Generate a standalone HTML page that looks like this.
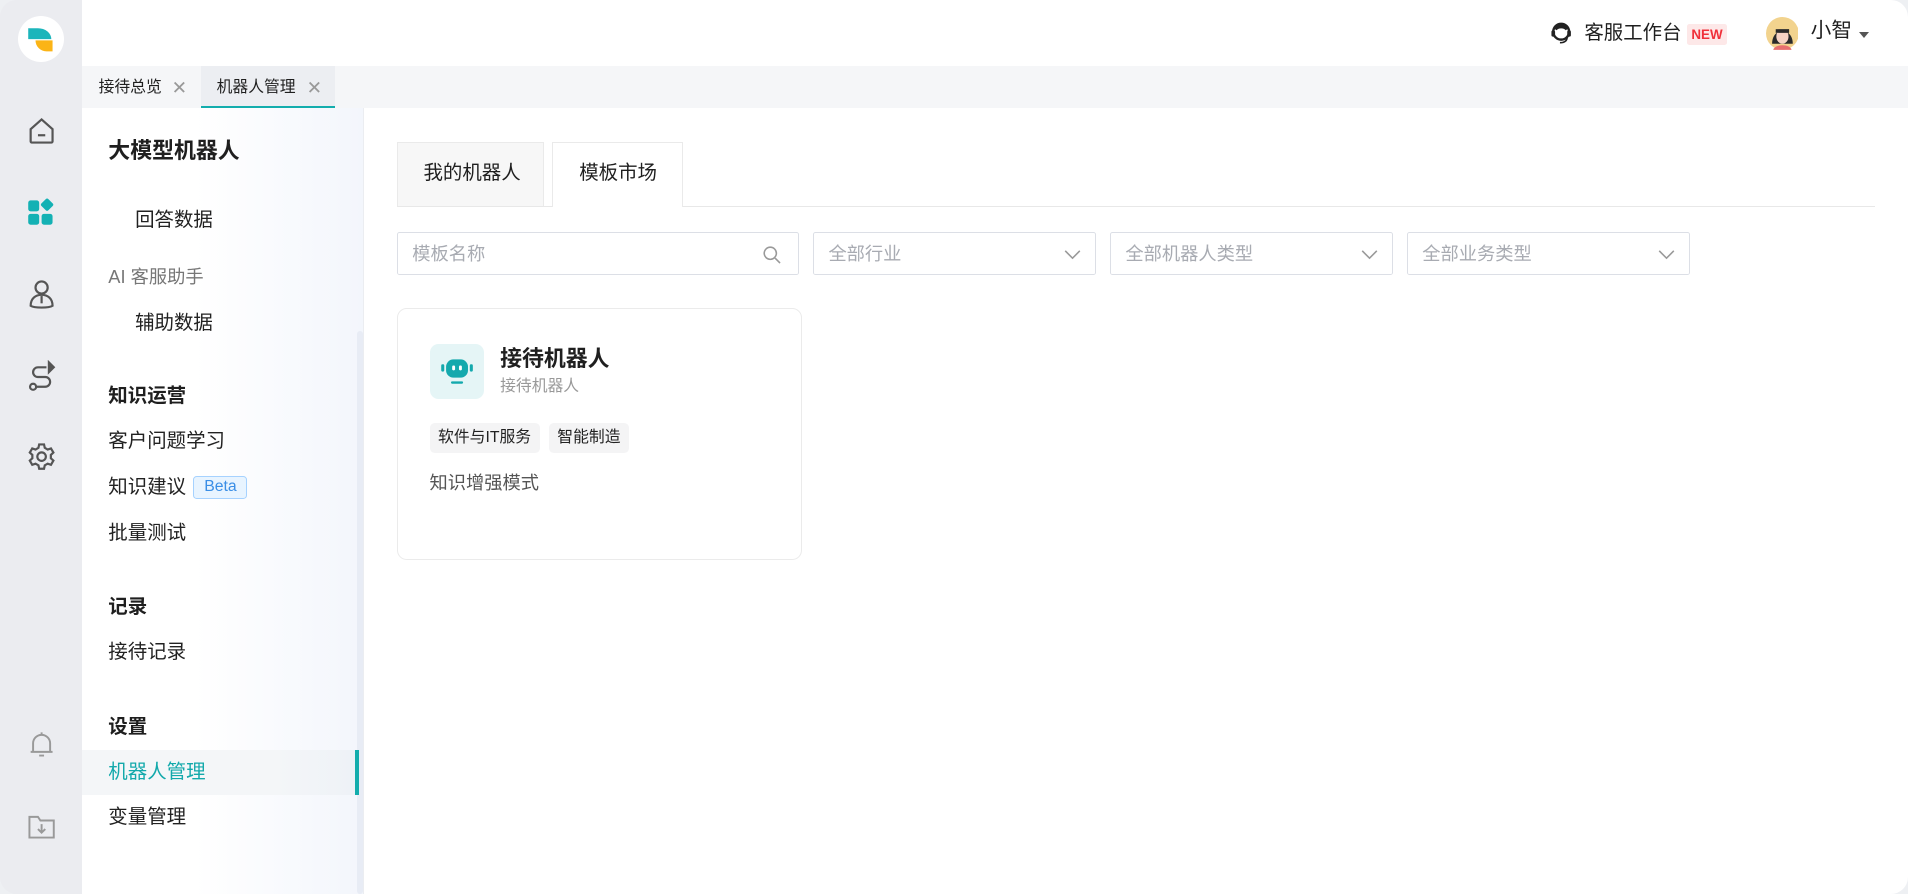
<!DOCTYPE html>
<html><head><meta charset="utf-8"><style>
html,body{margin:0;padding:0;width:1908px;height:894px;overflow:hidden;background:#eef0f3}
#z{zoom:1.21684;width:1568px;height:735px;position:relative;background:#ebedf1;border-radius:14px;overflow:hidden;font-family:"Liberation Sans","Noto Sans CJK SC",sans-serif;color:#1f1f1f}
.a{position:absolute}
.rail{left:0;top:0;width:67px;height:735px;background:#ebecf0}
.hdr{left:67px;top:0;right:0;height:54px;background:#fff}
.tabbar{left:67px;top:54px;right:0;height:35px;background:#f5f6f8}
.side{left:67px;top:89px;width:231px;height:646px;background:linear-gradient(90deg,#fff 40%,#f3f6fc)}
.main{left:299px;top:89px;right:0;height:646px;background:#fff}
.t{position:absolute;white-space:nowrap;line-height:1.2}
.sb{font-weight:bold;font-size:16px}
.si{font-size:16px;color:#222}
.inp{position:absolute;top:191px;height:35px;border:1px solid #dcdfe6;border-radius:2px;background:#fff;font-size:15px;line-height:1.2;color:#a8abb2;box-sizing:border-box;padding:8px 12px}
.chev{position:absolute;right:12px;top:10px}
.tag{position:absolute;top:348px;height:24px;background:#f4f4f5;border-radius:4px;font-size:13px;line-height:24px;padding:0 7px;color:#222}
</style></head><body><div id="z">
<div class="a rail"></div>
<div class="a" style="left:15px;top:13px;width:38px;height:38px;border-radius:50%;background:#fff"></div>
<svg class="a" style="left:22px;top:22px" width="22" height="22" viewBox="0 0 22 22"><path d="M1 1h8a11 9 0 0 1 11 9H1z" fill="#1cb5bb"/><path d="M7 11h14v9H16a9 9 0 0 1-9-9z" fill="#fbb416"/></svg>
<svg class="a" style="left:22px;top:96px" width="24" height="24" viewBox="0 0 24 24" fill="none" stroke="#555" stroke-width="1.8"><path d="M3 10l9-8 9 8v10a1 1 0 0 1-1 1H4a1 1 0 0 1-1-1z"/><path d="M9 15h6"/></svg>
<svg class="a" style="left:22px;top:163px" width="24" height="24" viewBox="0 0 24 24" fill="#14b1b4"><rect x="1" y="2" width="9" height="9" rx="2"/><rect x="1" y="13" width="9" height="9" rx="2"/><rect x="12" y="13" width="9" height="9" rx="2"/><rect x="12.5" y="1.5" width="8" height="8" rx="1.5" transform="rotate(45 16.5 5.5)"/></svg>
<svg class="a" style="left:22px;top:229px" width="24" height="26" viewBox="0 0 24 26" fill="none" stroke="#555" stroke-width="1.8"><circle cx="12" cy="7" r="5"/><path d="M3 22c0-6 4-9 9-9s9 3 9 9c-3 2-15 2-18 0z"/><path d="M12 14v6"/></svg>
<svg class="a" style="left:22px;top:296px" width="24" height="26" viewBox="0 0 24 26" fill="none" stroke="#555" stroke-width="1.8"><path d="M16 6H9a4 4 0 0 0 0 8h6a4 4 0 0 1 0 8H8"/><circle cx="5" cy="22" r="2.5"/><path d="M18 2l4 4-4 4z" fill="#555"/></svg>
<svg class="a" style="left:22px;top:363px" width="24" height="24" viewBox="0 0 24 24" fill="none" stroke="#555" stroke-width="1.8"><circle cx="12" cy="12" r="3.5"/><path d="M10 2h4l.6 2.8 2.4 1.4 2.7-.9 2 3.4-2.1 1.9v2.8l2.1 1.9-2 3.4-2.7-.9-2.4 1.4L14 22h-4l-.6-2.8-2.4-1.4-2.7.9-2-3.4 2.1-1.9v-2.8L2.3 8.7l2-3.4 2.7.9 2.4-1.4z"/></svg>
<svg class="a" style="left:22px;top:600px" width="24" height="24" viewBox="0 0 24 24" fill="none" stroke="#999" stroke-width="1.6"><path d="M5 18V11a7 7 0 0 1 14 0v7zM3 18h18M10 21h4M12 2v2"/></svg>
<svg class="a" style="left:22px;top:667px" width="24" height="24" viewBox="0 0 24 24" fill="none" stroke="#999" stroke-width="1.6"><path d="M2 4h7l2 3h11v14H2z"/><path d="M12 10v7M9 14l3 3 3-3"/></svg>

<div class="a hdr"></div>
<svg class="a" style="left:1273px;top:18px" width="20" height="20" viewBox="0 0 20 20"><circle cx="10" cy="8" r="6.5" fill="none" stroke="#222" stroke-width="2"/><path d="M5 6c2-3 8-3 10 0" stroke="#222" stroke-width="3" fill="none"/><rect x="2" y="7" width="3" height="5" rx="1" fill="#222"/><rect x="15" y="7" width="3" height="5" rx="1" fill="#222"/><path d="M15 12c0 4-3 5-6 5" stroke="#222" stroke-width="1.3" fill="none"/></svg>
<div class="t" style="left:1302px;top:18px;font-size:16px">客服工作台</div>
<div class="t" style="left:1386px;top:20px;background:#fde8e8;color:#f0303a;font-size:11px;font-weight:bold;padding:2px 4px;border-radius:2px">NEW</div>
<svg class="a" style="left:1451px;top:14px" width="27" height="27" viewBox="0 0 27 27"><circle cx="13.5" cy="13.5" r="13.5" fill="#f2d38e"/><path d="M5 22c0-14 17-14 17 0z" fill="#2a2a2a"/><ellipse cx="13.5" cy="16" rx="5" ry="6" fill="#f6d3c4"/><path d="M8 13h11v-3H8z" fill="#2a2a2a"/><path d="M6 27c1-5 14-5 15 0z" fill="#e86f6f"/></svg>
<div class="t" style="left:1488px;top:16px;font-size:17px">小智</div>
<div class="a" style="left:1528px;top:26px;border:4.5px solid transparent;border-top:5px solid #555;border-bottom:0"></div>

<div class="a tabbar"></div>
<div class="t" style="left:81px;top:65px;font-size:13px">接待总览</div>
<div class="t" style="left:141px;top:63px;font-size:15px;color:#999">✕</div>
<div class="a" style="left:165px;top:54px;width:110px;height:33px;background:#eceef2;border-bottom:2px solid #13adad"></div>
<div class="t" style="left:178px;top:65px;font-size:13px">机器人管理</div>
<div class="t" style="left:252px;top:63px;font-size:15px;color:#999">✕</div>

<div class="a side"></div>
<div class="a" style="left:293px;top:272px;width:5px;height:463px;background:#e8ecf5;border-radius:3px"></div>
<div class="t" style="left:89px;top:113px;font-size:18px;font-weight:bold">大模型机器人</div>
<div class="t si" style="left:111px;top:172px">回答数据</div>
<div class="t" style="left:89px;top:219px;font-size:15px;color:#777">AI 客服助手</div>
<div class="t si" style="left:111px;top:256px">辅助数据</div>
<div class="t sb" style="left:89px;top:316px">知识运营</div>
<div class="t si" style="left:89px;top:353px">客户问题学习</div>
<div class="t si" style="left:89px;top:391px">知识建议</div>
<div class="t" style="left:159px;top:391px;font-size:13px;color:#3a8ee6;background:#e8f4ff;border:1px solid #a6d2ff;border-radius:3px;padding:1px 8px">Beta</div>
<div class="t si" style="left:89px;top:429px">批量测试</div>
<div class="t sb" style="left:89px;top:490px">记录</div>
<div class="t si" style="left:89px;top:527px">接待记录</div>
<div class="t sb" style="left:89px;top:588px">设置</div>
<div class="a" style="left:67px;top:616px;width:225px;height:37px;background:linear-gradient(90deg,#f4f6f8 70%,#eef2f7)"></div>
<div class="a" style="left:292px;top:616px;width:3px;height:37px;background:#13adad"></div>
<div class="t si" style="left:89px;top:625px;color:#13a9ab">机器人管理</div>
<div class="t si" style="left:89px;top:662px">变量管理</div>

<div class="a main"></div>
<div class="a" style="left:326px;top:169px;width:1215px;height:1px;background:#e8e8e8"></div>
<div class="a" style="left:326px;top:117px;width:121px;height:52px;background:#f7f7f7;border:1px solid #eaeaea;border-bottom:0;box-sizing:border-box"></div>
<div class="t" style="left:348px;top:133px;font-size:16px">我的机器人</div>
<div class="a" style="left:454px;top:117px;width:107px;height:53px;background:#fff;border:1px solid #eaeaea;border-bottom:0;box-sizing:border-box"></div>
<div class="t" style="left:476px;top:133px;font-size:16px">模板市场</div>

<div class="inp" style="left:326px;width:331px">模板名称<svg style="position:absolute;right:14px;top:10px" width="15" height="15" viewBox="0 0 15 15" fill="none" stroke="#999" stroke-width="1.3"><circle cx="6" cy="6" r="5"/><path d="M10 10l4 4"/></svg></div>
<div class="inp" style="left:668px;width:233px">全部行业<svg class="chev" width="14" height="14" viewBox="0 0 14 14" fill="none" stroke="#999" stroke-width="1.3"><path d="M1 4l6 6 6-6"/></svg></div>
<div class="inp" style="left:912px;width:233px">全部机器人类型<svg class="chev" width="14" height="14" viewBox="0 0 14 14" fill="none" stroke="#999" stroke-width="1.3"><path d="M1 4l6 6 6-6"/></svg></div>
<div class="inp" style="left:1156px;width:233px">全部业务类型<svg class="chev" width="14" height="14" viewBox="0 0 14 14" fill="none" stroke="#999" stroke-width="1.3"><path d="M1 4l6 6 6-6"/></svg></div>

<div class="a" style="left:326px;top:253px;width:333px;height:207px;border:1px solid #ebebeb;border-radius:8px;box-sizing:border-box;background:#fff"></div>
<div class="a" style="left:353px;top:283px;width:45px;height:45px;border-radius:7px;background:#e5f5f6"></div>
<svg class="a" style="left:362px;top:293px" width="28" height="24" viewBox="0 0 28 24"><rect x="5" y="2" width="18" height="15" rx="6" fill="#14a9ad"/><rect x="1" y="6" width="2.5" height="6" rx="1" fill="#14a9ad"/><rect x="24.5" y="6" width="2.5" height="6" rx="1" fill="#14a9ad"/><rect x="10" y="7" width="2.4" height="4" rx="1" fill="#fff"/><rect x="15.6" y="7" width="2.4" height="4" rx="1" fill="#fff"/><rect x="9" y="20" width="10" height="2" rx="1" fill="#14a9ad"/></svg>
<div class="t" style="left:411px;top:284px;font-size:18px;font-weight:bold">接待机器人</div>
<div class="t" style="left:411px;top:311px;font-size:13px;color:#999">接待机器人</div>
<div class="tag" style="left:353px">软件与IT服务</div>
<div class="tag" style="left:451px">智能制造</div>
<div class="t" style="left:353px;top:388px;font-size:15px;color:#555">知识增强模式</div>
</div></body></html>
